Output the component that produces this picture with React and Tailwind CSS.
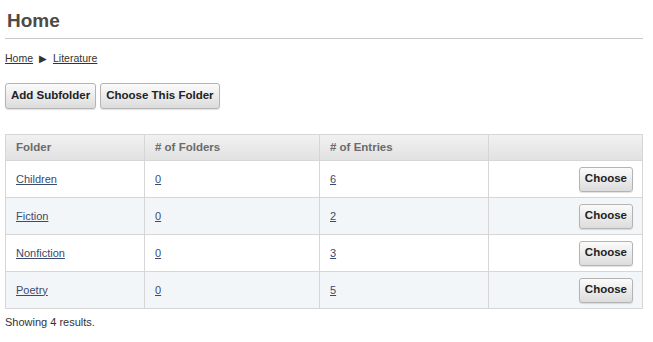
import React from 'react';

const rows = [
  { name: 'Children', folders: 0, entries: 6 },
  { name: 'Fiction', folders: 0, entries: 2 },
  { name: 'Nonfiction', folders: 0, entries: 3 },
  { name: 'Poetry', folders: 0, entries: 5 },
];

const btn =
  'rounded-[3px] border border-[#b4b4b4] bg-gradient-to-b from-[#fbfbfb] to-[#dcdcdc] font-bold text-[#222] shadow-[0_1px_1px_rgba(0,0,0,0.12)]';

export default function App() {
  return (
    <div className="min-h-[342px] bg-white pl-[5px] pr-[10px] font-['Liberation_Sans',Arial,sans-serif] text-[11px] text-[#333]">
      {/* Title */}
      <h1 className="border-b border-[#c8c8c8] pl-[2px] pt-[9px] pb-[6px] text-[19px] font-bold leading-[23px] text-[#4d4a47]">
        Home
      </h1>

      {/* Breadcrumb */}
      <div className="mt-[13px] flex items-center gap-[6px] text-[10.5px] leading-[13px]">
        <a href="#" className="text-[#333] underline">Home</a>
        <span className="text-[10px] text-[#333]">&#9654;</span>
        <a href="#" className="text-[#333] underline">Literature</a>
      </div>

      {/* Actions */}
      <div className="mt-[18px] flex gap-[4px]">
        <button type="button" className={`${btn} h-[26px] px-[5px] text-[11.5px]`}>
          Add Subfolder
        </button>
        <button type="button" className={`${btn} h-[26px] px-[5px] text-[11.5px]`}>
          Choose This Folder
        </button>
      </div>

      {/* Table */}
      <table className="mt-[25px] w-full border-collapse border border-[#d6d6d6]">
        <thead>
          <tr className="h-[26px] bg-gradient-to-b from-[#f1f1f1] to-[#e1e1e1] text-left text-[11.5px] font-bold text-[#6b6b6b]">
            <th className="w-[139px] border border-[#d6d6d6] px-[10px]">Folder</th>
            <th className="w-[175px] border border-[#d6d6d6] px-[10px]"># of Folders</th>
            <th className="w-[169px] border border-[#d6d6d6] px-[10px]"># of Entries</th>
            <th className="border border-[#d6d6d6] px-[10px]"></th>
          </tr>
        </thead>
        <tbody>
          {rows.map((r, i) => (
            <tr key={r.name} className={`h-[37px] ${i % 2 === 1 ? 'bg-[#f3f6f9]' : 'bg-white'}`}>
              <td className="border border-[#d6d6d6] px-[10px]">
                <a href="#" className="text-[#3c4a6e] underline">{r.name}</a>
              </td>
              <td className="border border-[#d6d6d6] px-[10px]">
                <a href="#" className="text-[#3c4a6e] underline">{r.folders}</a>
              </td>
              <td className="border border-[#d6d6d6] px-[10px]">
                <a href="#" className="text-[#3c4a6e] underline">{r.entries}</a>
              </td>
              <td className="border border-[#d6d6d6] pr-[9px] text-right">
                <button type="button" className={`${btn} h-[25px] px-[5px] text-[11.5px]`}>
                  Choose
                </button>
              </td>
            </tr>
          ))}
        </tbody>
      </table>

      <p className="mt-[5px] text-[11px] text-[#333]">Showing 4 results.</p>
    </div>
  );
}
